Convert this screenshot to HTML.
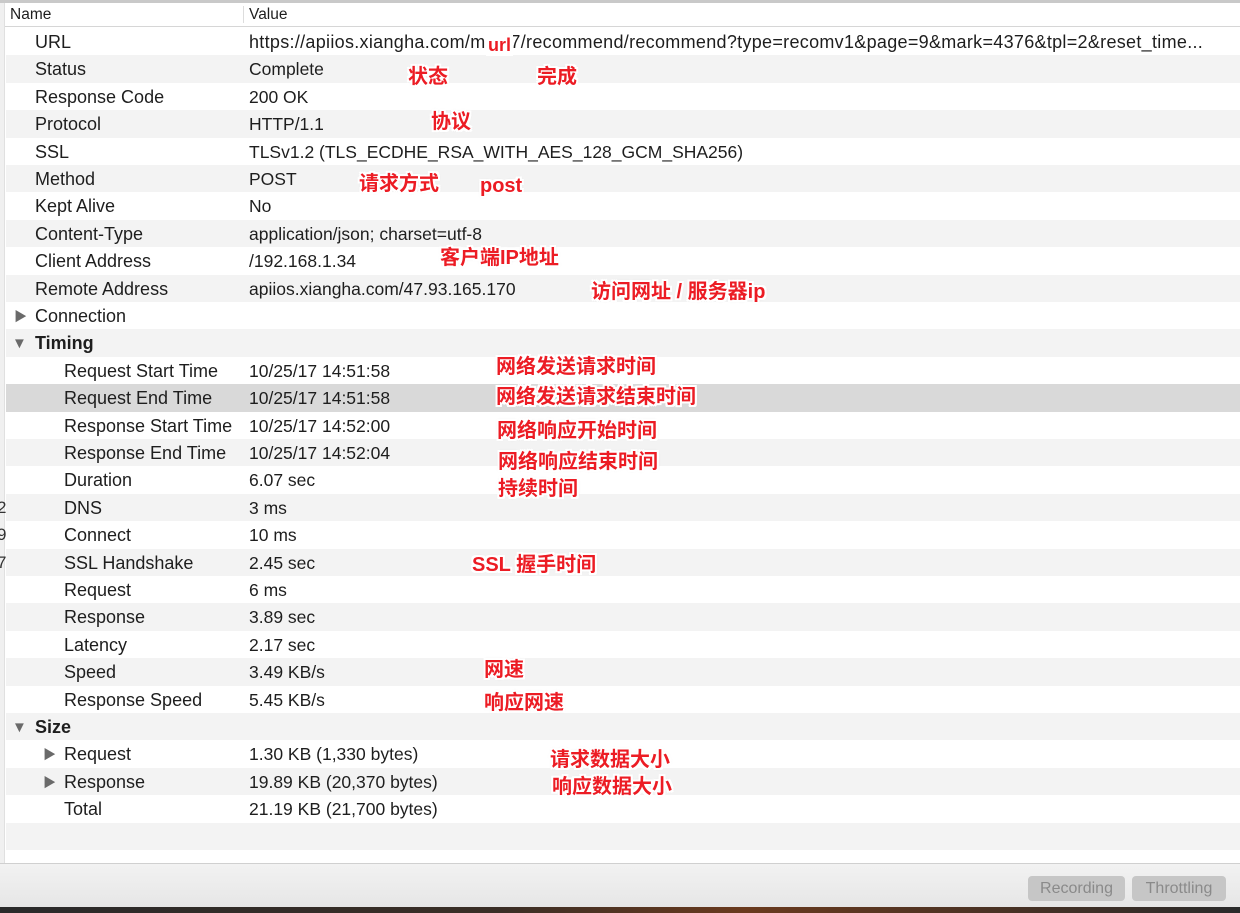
<!DOCTYPE html>
<html><head><meta charset="utf-8"><style>
*{margin:0;padding:0;box-sizing:border-box}
body{width:1240px;height:913px;overflow:hidden;background:#fff;font-family:"Liberation Sans","Noto Sans CJK SC",sans-serif;color:#1e1e1e;position:relative}
.top{position:absolute;left:0;top:0;width:1240px;height:3px;background:#c9c9c9}
.hdr{position:absolute;left:5px;top:3px;width:1235px;height:24px;background:#fff;border-bottom:1px solid #d6d6d6;font-size:15.5px}
.hdr span{position:absolute;top:3px}
.sep{position:absolute;left:238px;top:3px;width:1px;height:17px;background:#ddd}
.side{position:absolute;left:0;top:3px;width:5px;height:860px;background:#f0f0f0;border-right:1px solid #e0e0e0}
.row{position:absolute;left:6px;width:1234px;height:27.4px;font-size:18px;line-height:29px}
.g{background:#f3f3f3}.sel{background:#d9d9d9}
.n{position:absolute;white-space:nowrap}
.v{position:absolute;left:243px;white-space:nowrap;font-size:17.5px}
.b{font-weight:bold}
.tri{position:absolute;font-size:13px;color:#6a6a6a}
.a{position:absolute;color:#ec1c24;font-weight:bold;font-size:20px;white-space:nowrap;line-height:22px;
text-shadow:-2px 0 #fff,2px 0 #fff,0 -2px #fff,0 2px #fff,-2px -2px #fff,2px 2px #fff,-2px 2px #fff,2px -2px #fff,0 0 3px #bbb}
.foot{position:absolute;left:0;top:863px;width:1240px;height:44px;background:linear-gradient(#f2f2f2,#e6e6e6);border-top:1px solid #d0d0d0}
.btn{position:absolute;top:12px;height:25px;background:#c6c6c6;border-radius:4px;color:#8a8a8a;font-size:16px;line-height:25px;text-align:center}
.dark{position:absolute;left:0;top:907px;width:1240px;height:6px;background:linear-gradient(90deg,#2a2a2a,#3a2e26 40%,#6a3a1e 60%,#2a2a2a)}
.ln{position:absolute;left:-3px;font-size:17px;color:#333}
</style></head><body>
<div class="top"></div>
<div class="side"></div>
<div class="hdr"><span style="left:5px">Name</span><div class="sep"></div><span style="left:244px">Value</span></div>

<div class="row" style="top:28px"><span class="n" style="left:29px">URL</span><span class="v" style="font-size:18px;letter-spacing:0.3px">https://apiios.xiangha.com/main7/recommend/recommend?type=recomv1&amp;page=9&amp;mark=4376&amp;tpl=2&amp;reset_time...</span></div>
<div class="row g" style="top:55.4px"><span class="n" style="left:29px">Status</span><span class="v">Complete</span></div>
<div class="row" style="top:82.8px"><span class="n" style="left:29px">Response Code</span><span class="v">200 OK</span></div>
<div class="row g" style="top:110.2px"><span class="n" style="left:29px">Protocol</span><span class="v">HTTP/1.1</span></div>
<div class="row" style="top:137.6px"><span class="n" style="left:29px">SSL</span><span class="v">TLSv1.2 (TLS_ECDHE_RSA_WITH_AES_128_GCM_SHA256)</span></div>
<div class="row g" style="top:165px"><span class="n" style="left:29px">Method</span><span class="v">POST</span></div>
<div class="row" style="top:192.4px"><span class="n" style="left:29px">Kept Alive</span><span class="v">No</span></div>
<div class="row g" style="top:219.8px"><span class="n" style="left:29px">Content-Type</span><span class="v">application/json; charset=utf-8</span></div>
<div class="row" style="top:247.2px"><span class="n" style="left:29px">Client Address</span><span class="v">/192.168.1.34</span></div>
<div class="row g" style="top:274.6px"><span class="n" style="left:29px">Remote Address</span><span class="v">apiios.xiangha.com/47.93.165.170</span></div>
<div class="row" style="top:302px"><span class="tri" style="left:8px">▶</span><span class="n" style="left:29px">Connection</span></div>
<div class="row g" style="top:329.4px"><span class="tri" style="left:6px;font-size:15px">▼</span><span class="n b" style="left:29px">Timing</span></div>
<div class="row" style="top:356.8px"><span class="n" style="left:58px">Request Start Time</span><span class="v">10/25/17 14:51:58</span></div>
<div class="row sel" style="top:384.2px"><span class="n" style="left:58px">Request End Time</span><span class="v">10/25/17 14:51:58</span></div>
<div class="row" style="top:411.6px"><span class="n" style="left:58px">Response Start Time</span><span class="v">10/25/17 14:52:00</span></div>
<div class="row g" style="top:439px"><span class="n" style="left:58px">Response End Time</span><span class="v">10/25/17 14:52:04</span></div>
<div class="row" style="top:466.4px"><span class="n" style="left:58px">Duration</span><span class="v">6.07 sec</span></div>
<div class="row g" style="top:493.8px"><span class="n" style="left:58px">DNS</span><span class="v">3 ms</span></div>
<div class="row" style="top:521.2px"><span class="n" style="left:58px">Connect</span><span class="v">10 ms</span></div>
<div class="row g" style="top:548.6px"><span class="n" style="left:58px">SSL Handshake</span><span class="v">2.45 sec</span></div>
<div class="row" style="top:576px"><span class="n" style="left:58px">Request</span><span class="v">6 ms</span></div>
<div class="row g" style="top:603.4px"><span class="n" style="left:58px">Response</span><span class="v">3.89 sec</span></div>
<div class="row" style="top:630.8px"><span class="n" style="left:58px">Latency</span><span class="v">2.17 sec</span></div>
<div class="row g" style="top:658.2px"><span class="n" style="left:58px">Speed</span><span class="v">3.49 KB/s</span></div>
<div class="row" style="top:685.6px"><span class="n" style="left:58px">Response Speed</span><span class="v">5.45 KB/s</span></div>
<div class="row g" style="top:713px"><span class="tri" style="left:6px;font-size:15px">▼</span><span class="n b" style="left:29px">Size</span></div>
<div class="row" style="top:740.4px"><span class="tri" style="left:37px">▶</span><span class="n" style="left:58px">Request</span><span class="v">1.30 KB (1,330 bytes)</span></div>
<div class="row g" style="top:767.8px"><span class="tri" style="left:37px">▶</span><span class="n" style="left:58px">Response</span><span class="v">19.89 KB (20,370 bytes)</span></div>
<div class="row" style="top:795.2px"><span class="n" style="left:58px">Total</span><span class="v">21.19 KB (21,700 bytes)</span></div>
<div class="row g" style="top:822.6px"></div>

<span class="ln" style="top:498px">2</span>
<span class="ln" style="top:525px">9</span>
<span class="ln" style="top:553px">7</span>

<div class="a" style="left:486px;top:34px;font-size:18px;text-shadow:none;background:#fff;padding:0 2px">url</div>
<div class="a" style="left:408px;top:66px">状态</div>
<div class="a" style="left:537px;top:66px">完成</div>
<div class="a" style="left:431px;top:111px">协议</div>
<div class="a" style="left:359px;top:173px">请求方式</div>
<div class="a" style="left:480px;top:175px">post</div>
<div class="a" style="left:440px;top:247px">客户端IP地址</div>
<div class="a" style="left:591px;top:281px">访问网址 / 服务器ip</div>
<div class="a" style="left:496px;top:356px">网络发送请求时间</div>
<div class="a" style="left:496px;top:386px">网络发送请求结束时间</div>
<div class="a" style="left:497px;top:420px">网络响应开始时间</div>
<div class="a" style="left:498px;top:451px">网络响应结束时间</div>
<div class="a" style="left:498px;top:478px">持续时间</div>
<div class="a" style="left:472px;top:554px">SSL 握手时间</div>
<div class="a" style="left:484px;top:659px">网速</div>
<div class="a" style="left:484px;top:692px">响应网速</div>
<div class="a" style="left:550px;top:749px">请求数据大小</div>
<div class="a" style="left:552px;top:776px">响应数据大小</div>

<div class="foot">
<div class="btn" style="left:1028px;width:97px">Recording</div>
<div class="btn" style="left:1132px;width:94px">Throttling</div>
</div>
<div class="dark"></div>
</body></html>
